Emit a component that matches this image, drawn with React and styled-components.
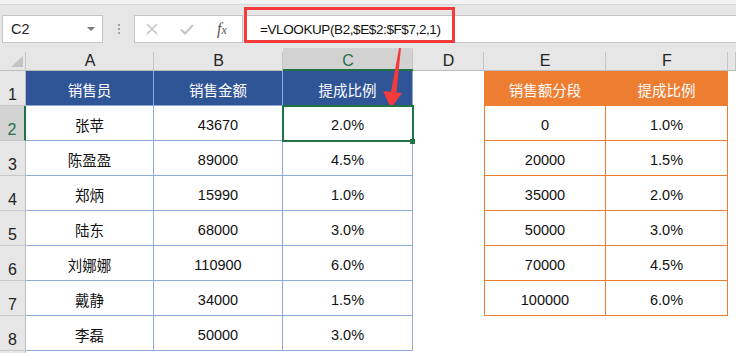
import styled, { createGlobalStyle } from "styled-components";

const GlobalStyle = createGlobalStyle`
  html, body {
    margin: 0;
    padding: 0;
    background: #fff;
  }
  body {
    font-family: "Liberation Sans", "Noto Sans CJK SC", sans-serif;
  }
`;

const green = "#217346";

const Window = styled.div`
  position: relative;
  width: 736px;
  height: 353px;
  overflow: hidden;
  background: #fff;
`;

const TopStrip = styled.div`
  height: 4px;
  background: #f3f3f3;
  border-bottom: 1px solid #d6d6d6;
`;

const FormulaBar = styled.div`
  display: flex;
  align-items: center;
  height: 43px;
  padding: 10px 0 5px 2px;
  box-sizing: border-box;
  background: #e6e6e6;
`;

const NameBox = styled.div`
  display: flex;
  align-items: center;
  justify-content: space-between;
  width: 101px;
  height: 28px;
  box-sizing: border-box;
  padding: 0 7px 0 8px;
  background: #fff;
  border: 1px solid #c6c6c6;
  font-size: 14.5px;
  color: #222;
`;

const DropArrow = styled.span`
  width: 0;
  height: 0;
  border-left: 4px solid transparent;
  border-right: 4px solid transparent;
  border-top: 4px solid #777;
`;

const Grip = styled.div`
  display: flex;
  flex-direction: column;
  align-items: center;
  justify-content: center;
  gap: 2px;
  width: 31px;
`;

const GripDot = styled.span`
  width: 2px;
  height: 2px;
  background: #a0a0a0;
`;

const FxBox = styled.div`
  display: flex;
  align-items: center;
  width: 109px;
  height: 28px;
  box-sizing: border-box;
  padding-left: 11px;
  gap: 22px;
  background: #fff;
  border: 1px solid #c6c6c6;
`;

const FxLabel = styled.i`
  font-family: "Liberation Serif", serif;
  font-size: 16px;
  color: #555;
  margin-left: 1px;

  small {
    font-size: 12px;
  }
`;

const Input = styled.div`
  flex: 1;
  display: flex;
  align-items: center;
  height: 28px;
  box-sizing: border-box;
  margin-left: 2px;
  padding-left: 14px;
  background: #fff;
  border: 1px solid #c6c6c6;
  border-right: none;
  font-size: 13.5px;
  letter-spacing: -0.4px;
  color: #111;
`;

const RedBox = styled.div`
  position: absolute;
  left: 244px;
  top: 7px;
  width: 211px;
  height: 36px;
  box-sizing: border-box;
  border: 3px solid #f43a3a;
`;

const Arrow = styled.svg`
  position: absolute;
  left: 0;
  top: 0;
  pointer-events: none;
`;

const Sheet = styled.div`
  display: grid;
  grid-template-columns: 26px 128px 129px 130px 71px 122px 122px 1fr;
  grid-template-rows: 23px repeat(9, 35px);
`;

const Corner = styled.div`
  display: flex;
  align-items: flex-end;
  justify-content: flex-end;
  padding: 0 3px 3px 0;
  background: #e6e6e6 linear-gradient(#c6c6c6, #c6c6c6) right bottom / 1px 18px no-repeat;
  border-bottom: 1px solid #bdbdbd;

  span {
    width: 0;
    height: 0;
    border-left: 12px solid transparent;
    border-bottom: 11px solid #c2c2c2;
  }
`;

const ColHead = styled.div`
  display: flex;
  align-items: center;
  justify-content: center;
  padding-top: 4px;
  box-sizing: border-box;
  font-size: 16px;
  color: ${(p) => (p.$active ? green : "#222")};
  background: ${(p) => (p.$active ? "#d2d2d2" : "#e6e6e6")}
    linear-gradient(#c6c6c6, #c6c6c6) right bottom / 1px 18px no-repeat;
  border-bottom: ${(p) => (p.$active ? `2px solid ${green}` : "1px solid #bdbdbd")};
`;

const RowHead = styled.div`
  display: flex;
  align-items: flex-end;
  justify-content: center;
  padding-bottom: 1px;
  box-sizing: border-box;
  font-size: 16px;
  color: ${(p) => (p.$active ? green : "#222")};
  background: ${(p) => (p.$active ? "#d2d2d2" : "#e6e6e6")};
  border-right: ${(p) => (p.$active ? `2px solid ${green}` : "1px solid #bdbdbd")};
  border-bottom: 1px solid #c8c8c8;
`;

const tones = {
  blueHead: { bg: "#2f5597", line: "#8eaadb", color: "#fff" },
  blue: { bg: "#fff", line: "#8eaadb", color: "#111" },
  orangeHead: { bg: "#ed7d31", line: "#ed7d31", color: "#fff" },
  orange: { bg: "#fff", line: "#ed7d31", color: "#111" },
};

const Cell = styled.div`
  position: relative;
  display: flex;
  align-items: center;
  justify-content: center;
  padding-top: 3px;
  box-sizing: border-box;
  font-size: 14.5px;
  background: ${(p) => tones[p.$tone].bg};
  color: ${(p) => tones[p.$tone].color};
  border-right: 1px solid ${(p) => tones[p.$tone].line};
  border-bottom: 1px solid ${(p) => tones[p.$tone].line};
  border-left: ${(p) => (p.$first ? `1px solid ${tones[p.$tone].line}` : "none")};
  ${(p) =>
    p.$selected &&
    `
    z-index: 1;
    outline: 2px solid ${green};
    outline-offset: -1px;
  `}
`;

const FillHandle = styled.span`
  position: absolute;
  right: -3px;
  bottom: -4px;
  width: 5px;
  height: 5px;
  background: ${green};
`;

const Blank = styled.div`
  background: #fff;
`;

const columns = ["A", "B", "C", "D", "E", "F", ""];

const sales = [
  ["张苹", "43670", "2.0%"],
  ["陈盈盈", "89000", "4.5%"],
  ["郑炳", "15990", "1.0%"],
  ["陆东", "68000", "3.0%"],
  ["刘娜娜", "110900", "6.0%"],
  ["戴静", "34000", "1.5%"],
  ["李磊", "50000", "3.0%"],
];

const rates = [
  ["0", "1.0%"],
  ["20000", "1.5%"],
  ["35000", "2.0%"],
  ["50000", "3.0%"],
  ["70000", "4.5%"],
  ["100000", "6.0%"],
];

// row 9 only peeks in at the bottom edge, its number sits below the fold
const visibleRows = 8;

function SheetRow({ n }) {
  const sale = n === 1 ? ["销售员", "销售金额", "提成比例"] : sales[n - 2];
  const rate = n === 1 ? ["销售额分段", "提成比例"] : rates[n - 2];
  const blueTone = n === 1 ? "blueHead" : "blue";
  const orangeTone = n === 1 ? "orangeHead" : "orange";

  return (
    <>
      <RowHead $active={n === 2}>{n <= visibleRows ? n : ""}</RowHead>
      {sale ? (
        sale.map((v, i) => (
          <Cell key={i} $tone={blueTone} $selected={n === 2 && i === 2}>
            {v}
            {n === 2 && i === 2 && <FillHandle />}
          </Cell>
        ))
      ) : (
        <>
          <Blank />
          <Blank />
          <Blank />
        </>
      )}
      <Blank />
      {rate ? (
        rate.map((v, i) => (
          <Cell key={i} $tone={orangeTone} $first={i === 0}>
            {v}
          </Cell>
        ))
      ) : (
        <>
          <Blank />
          <Blank />
        </>
      )}
      <Blank />
    </>
  );
}

export default function App() {
  return (
    <Window>
      <GlobalStyle />
      <TopStrip />
      <FormulaBar>
        <NameBox>
          C2
          <DropArrow />
        </NameBox>
        <Grip>
          <GripDot />
          <GripDot />
          <GripDot />
        </Grip>
        <FxBox>
          <svg width="12" height="12" viewBox="0 0 12 12">
            <path d="M1 1 L11 11 M11 1 L1 11" stroke="#c4c4c4" strokeWidth="1.6" fill="none" />
          </svg>
          <svg width="14" height="11" viewBox="0 0 14 11">
            <path d="M1 5.5 L5 9.5 L13 1" stroke="#c4c4c4" strokeWidth="2" fill="none" />
          </svg>
          <FxLabel>
            f<small>x</small>
          </FxLabel>
        </FxBox>
        <Input>=VLOOKUP(B2,$E$2:$F$7,2,1)</Input>
      </FormulaBar>
      <Sheet>
        <Corner>
          <span />
        </Corner>
        {columns.map((c) => (
          <ColHead key={c || "G"} $active={c === "C"}>
            {c}
          </ColHead>
        ))}
        {[1, 2, 3, 4, 5, 6, 7, 8, 9].map((n) => (
          <SheetRow key={n} n={n} />
        ))}
      </Sheet>
      <RedBox />
      <Arrow width="736" height="353" viewBox="0 0 736 353">
        <polygon points="399,48 401,48 396.5,92 391,92" fill="#f43a3a" />
        <polygon points="383,91 402,93 391,108" fill="#f43a3a" />
      </Arrow>
    </Window>
  );
}
